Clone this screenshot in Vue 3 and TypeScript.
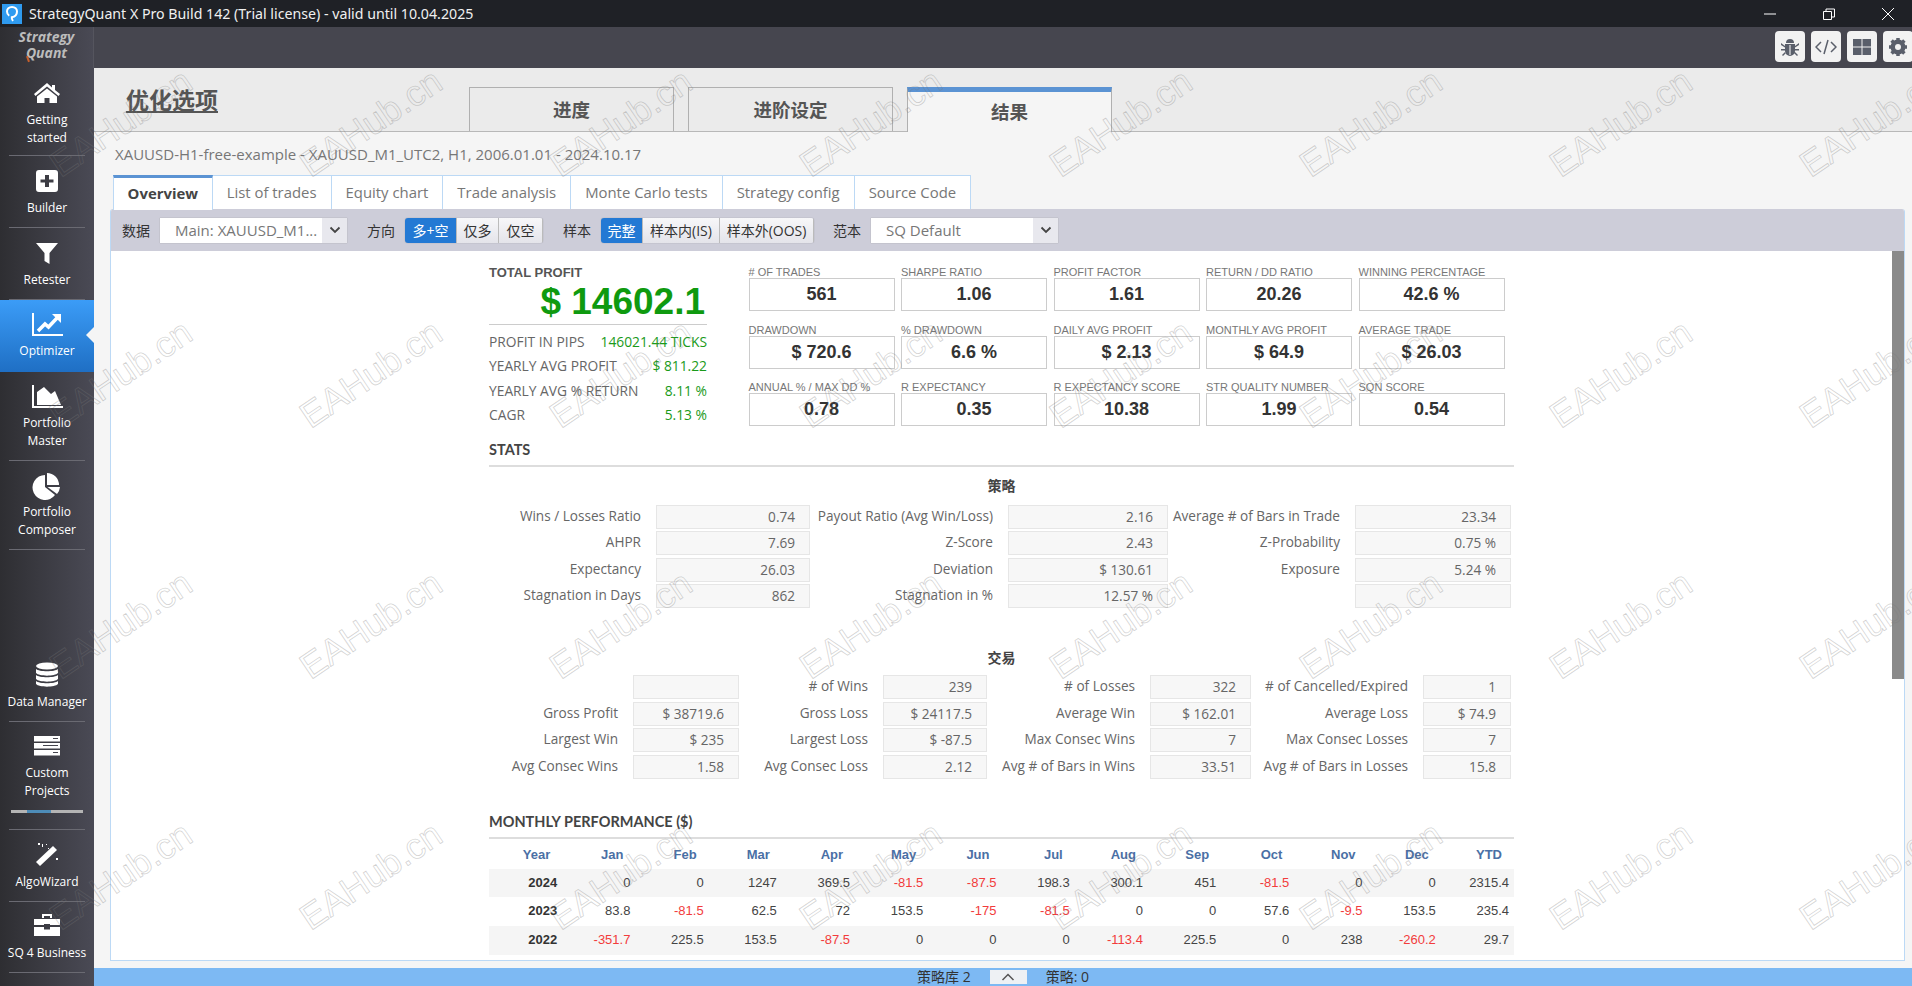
<script setup lang="ts">
const navTop = [
  { key: 'home', lines: ['Getting', 'started'] },
  { key: 'builder', lines: ['Builder'] },
  { key: 'filter', lines: ['Retester'] },
  { key: 'chart', lines: ['Optimizer'], active: true },
  { key: 'area', lines: ['Portfolio', 'Master'] },
  { key: 'pie', lines: ['Portfolio', 'Composer'] },
]
const navBottom = [
  { key: 'db', lines: ['Data Manager'] },
  { key: 'server', lines: ['Custom', 'Projects'], bar: true },
  { key: 'wand', lines: ['AlgoWizard'] },
  { key: 'case', lines: ['SQ 4 Business'] },
]

const subTabs = ['Overview', 'List of trades', 'Equity chart', 'Trade analysis', 'Monte Carlo tests', 'Strategy config', 'Source Code']

const totals = [
  ['PROFIT IN PIPS', '146021.44 TICKS'],
  ['YEARLY AVG PROFIT', '$ 811.22'],
  ['YEARLY AVG % RETURN', '8.11 %'],
  ['CAGR', '5.13 %'],
]

const kpis = [
  ['# OF TRADES', '561'], ['SHARPE RATIO', '1.06'], ['PROFIT FACTOR', '1.61'], ['RETURN / DD RATIO', '20.26'], ['WINNING PERCENTAGE', '42.6 %'],
  ['DRAWDOWN', '$ 720.6'], ['% DRAWDOWN', '6.6 %'], ['DAILY AVG PROFIT', '$ 2.13'], ['MONTHLY AVG PROFIT', '$ 64.9'], ['AVERAGE TRADE', '$ 26.03'],
  ['ANNUAL % / MAX DD %', '0.78'], ['R EXPECTANCY', '0.35'], ['R EXPECTANCY SCORE', '10.38'], ['STR QUALITY NUMBER', '1.99'], ['SQN SCORE', '0.54'],
]

const strategyStats = [
  ['Wins / Losses Ratio', '0.74'], ['Payout Ratio (Avg Win/Loss)', '2.16'], ['Average # of Bars in Trade', '23.34'],
  ['AHPR', '7.69'], ['Z-Score', '2.43'], ['Z-Probability', '0.75 %'],
  ['Expectancy', '26.03'], ['Deviation', '$ 130.61'], ['Exposure', '5.24 %'],
  ['Stagnation in Days', '862'], ['Stagnation in %', '12.57 %'], ['', ''],
]

const tradeStats = [
  ['', ''], ['# of Wins', '239'], ['# of Losses', '322'], ['# of Cancelled/Expired', '1'],
  ['Gross Profit', '$ 38719.6'], ['Gross Loss', '$ 24117.5'], ['Average Win', '$ 162.01'], ['Average Loss', '$ 74.9'],
  ['Largest Win', '$ 235'], ['Largest Loss', '$ -87.5'], ['Max Consec Wins', '7'], ['Max Consec Losses', '7'],
  ['Avg Consec Wins', '1.58'], ['Avg Consec Loss', '2.12'], ['Avg # of Bars in Wins', '33.51'], ['Avg # of Bars in Losses', '15.8'],
]

const months = ['Year', 'Jan', 'Feb', 'Mar', 'Apr', 'May', 'Jun', 'Jul', 'Aug', 'Sep', 'Oct', 'Nov', 'Dec', 'YTD']
const monthly = [
  ['2024', '0', '0', '1247', '369.5', '-81.5', '-87.5', '198.3', '300.1', '451', '-81.5', '0', '0', '2315.4'],
  ['2023', '83.8', '-81.5', '62.5', '72', '153.5', '-175', '-81.5', '0', '0', '57.6', '-9.5', '153.5', '235.4'],
  ['2022', '-351.7', '225.5', '153.5', '-87.5', '0', '0', '0', '-113.4', '225.5', '0', '238', '-260.2', '29.7'],
]

// 水印网格
const marks: number[] = Array.from({ length: 32 }, (_, i) => i)
</script>

<template>
  <div class="app">
    <div class="titlebar">
      <div class="logo-box">
        <svg width="20" height="20" viewBox="0 0 20 20"><path d="M11 17c-1.200-1.500-1.400-2.500-1.200-3.800 3-.4 5.200-2.700 5.200-5.700C15 5 13 3 10 3 7 3 5 5 5 7.500c0 1.800.8 3.200 2.200 4.200" fill="none" stroke="#fff" stroke-width="2"/></svg>
      </div>
      <span class="title-text">StrategyQuant X Pro Build 142 (Trial license) - valid until 10.04.2025</span>
      <div class="win-ctrls">
        <svg width="14" height="14" viewBox="0 0 14 14"><path d="M1 7h12" stroke="#fff" fill="none"/></svg>
        <svg width="14" height="14" viewBox="0 0 14 14"><path d="M1.500 4.500h8v8h-8zM4 4.500V2h8.500v8H9.500" stroke="#fff" fill="none"/></svg>
        <svg width="14" height="14" viewBox="0 0 14 14"><path d="M1 1l12 12M13 1L1 13" stroke="#fff" fill="none"/></svg>
      </div>
    </div>

    <div class="body">
      <aside class="sidebar">
        <div class="brand"><span>Strategy</span><span>Quant</span><i class="brand-tail"></i></div>
        <div class="nav-list">
          <div v-for="item in navTop" :key="item.key" class="nav-item" :class="{ active: item.active }">
            <svg class="nav-icon" viewBox="0 0 32 28" width="32" height="28">
              <path v-if="item.key === 'home'" d="M16 3L3 14l1.500 2L16 6.500 27.500 16l1.500-2-5-4V5h-3v2.500zM6 16.500V23h7.500v-5h5v5H26v-6.500L16 8.500z" fill="#fff"/>
              <path v-else-if="item.key === 'builder'" fill-rule="evenodd" d="M8 2h16a3 3 0 013 3v16a3 3 0 01-3 3H8a3 3 0 01-3-3V5a3 3 0 013-3zm6 5v4.500H9.500v3H14V19h4v-4.500h4.500v-3H18V7z" fill="#fff"/>
              <path v-else-if="item.key === 'filter'" d="M5 3h22l-8.500 10v11L13.500 21v-8z" fill="#fff"/>
              <g v-else-if="item.key === 'chart'">
                <path d="M2 2v22h30" fill="none" stroke="#fff" stroke-width="2"/>
                <path d="M7 20l7-7 3.500 3L26 7" fill="none" stroke="#fff" stroke-width="3.500"/>
                <path d="M21 3h9v9z" fill="#fff"/>
              </g>
              <g v-else-if="item.key === 'area'">
                <path d="M2 2v22h30" fill="none" stroke="#fff" stroke-width="2"/>
                <path d="M6 22V9l7-5 7 7 4-3 6 14z" fill="#fff"/>
              </g>
              <g v-else fill="#fff">
                <path d="M14 3a12.500 12.500 0 1010 20L14 15z"/>
                <path d="M16 1a12 12 0 0112 12H16z"/>
                <path d="M16.500 15H29a12 12 0 01-3 7z"/>
              </g>
            </svg>
            <span v-for="line in item.lines" :key="line">{{ line }}</span>
          </div>
        </div>
        <div class="nav-list nav-bottom">
          <div v-for="item in navBottom" :key="item.key" class="nav-item">
            <svg class="nav-icon" viewBox="0 0 32 28" width="32" height="28">
              <g v-if="item.key === 'db'" fill="#fff">
                <ellipse cx="16" cy="4" rx="11" ry="3.500"/>
                <path d="M5 7c3 3 19 3 22 0v4c-3 3.500-19 3.500-22 0zM5 13c3 3 19 3 22 0v4c-3 3.500-19 3.500-22 0zM5 19c3 3 19 3 22 0v3c-3 3.500-19 3.500-22 0z"/>
              </g>
              <g v-else-if="item.key === 'server'">
                <path d="M3 3h26v5.500H3zM3 10h26v5.500H3zM3 17h26v5.500H3z" fill="#fff"/>
                <path d="M22 5.500h5M12 12.500h15M22 19.500h5" stroke="#46464f" fill="none"/>
              </g>
              <g v-else-if="item.key === 'wand'" fill="#fff">
                <path d="M5 20L22 4l4 4L9 24z"/>
                <path d="M7 1h2v2H7zM11 2h1v3h-1zM15 2h1v1h-1zM25 16h2v2h-2zM17 6h1v1h-1z"/>
              </g>
              <g v-else fill="#fff">
                <path d="M3 6h26v6H19v-1h-6v1H3zM3 14h10v2.500h6V14h10v9H3z"/>
                <path d="M11 5V1h10v4h-2V3h-6v2z"/>
              </g>
            </svg>
            <span v-for="line in item.lines" :key="line">{{ line }}</span>
            <div v-if="item.bar" class="nav-progress"><i></i></div>
          </div>
        </div>
      </aside>

      <main class="main">
        <div class="topbar">
          <button class="tool-btn">
            <svg width="20" height="20" viewBox="0 0 20 20" fill="#5a5f6b"><path d="M6 6a4 4 0 018 0zM5 7h10v7a5 5 0 01-10 0zM1 6l4 3v1.500L1 8zM19 6l-4 3v1.500L19 8zM1 12h4v1.500H1zM19 12h-4v1.500h4zM5 15l-3 3 1 1 3-3zM15 15l3 3-1 1-3-3z"/><path d="M9.500 8h1v10h-1z" fill="#fff"/></svg>
          </button>
          <button class="tool-btn">
            <svg width="22" height="18" viewBox="0 0 22 18" fill="none" stroke="#5a5f6b" stroke-width="1.500"><path d="M6 4L1 9l5 5M16 4l5 5-5 5M13 2L9 16"/></svg>
          </button>
          <button class="tool-btn">
            <svg width="20" height="20" viewBox="0 0 20 20" fill="#5a5f6b"><path d="M1 2h8.500v7.500H1zM10.500 2H19v7.500h-8.500zM1 10.500h8.500V18H1zM10.500 10.500H19V18h-8.500z"/></svg>
          </button>
          <button class="tool-btn gear">
            <svg width="20" height="20" viewBox="0 0 20 20"><circle cx="10" cy="10" r="5.500" fill="none" stroke="#5a5f6b" stroke-width="4"/><path d="M10 1v18M1 10h18M3.600 3.600l12.800 12.800M16.400 3.600L3.600 16.400" stroke="#5a5f6b" stroke-width="3.500"/><circle cx="10" cy="10" r="3" fill="#f2f2f2"/></svg>
          </button>
        </div>

        <header class="page-head">
          <h1>优化选项</h1>
          <div class="big-tabs">
            <div class="big-tab">进度</div>
            <div class="big-tab">进阶设定</div>
            <div class="big-tab current">结果</div>
          </div>
        </header>

        <div class="work">
          <div class="subtitle">XAUUSD-H1-free-example - XAUUSD_M1_UTC2, H1, 2006.01.01 - 2024.10.17</div>
          <div class="sub-tabs">
            <div v-for="(t, i) in subTabs" :key="t" class="sub-tab" :class="{ on: i === 0 }">{{ t }}</div>
          </div>

          <section class="panel">
            <div class="toolbar">
              <span class="t-label">数据</span>
              <div class="select s1"><span>Main: XAUUSD_M1...</span><i><svg width="12" height="8" viewBox="0 0 12 8"><path d="M1.500 1.500L6 6l4.500-4.500" fill="none" stroke="#444" stroke-width="1.800"/></svg></i></div>
              <span class="t-label l2">方向</span>
              <div class="btn-group">
                <button class="on w52">多+空</button><button class="w42">仅多</button><button class="w44">仅空</button>
              </div>
              <span class="t-label l3">样本</span>
              <div class="btn-group">
                <button class="on w42">完整</button><button class="w77">样本内(IS)</button><button class="w94">样本外(OOS)</button>
              </div>
              <span class="t-label l4">范本</span>
              <div class="select s2"><span>SQ Default</span><i><svg width="12" height="8" viewBox="0 0 12 8"><path d="M1.500 1.500L6 6l4.500-4.500" fill="none" stroke="#444" stroke-width="1.800"/></svg></i></div>
            </div>

            <div class="sheet">
              <div class="report">
                <div class="summary">
                  <div class="total">
                    <div class="total-label">TOTAL PROFIT</div>
                    <div class="total-value">$ 14602.1</div>
                    <div v-for="row in totals" :key="row[0]" class="total-row">
                      <span>{{ row[0] }}</span><b>{{ row[1] }}</b>
                    </div>
                  </div>
                  <div class="kpis">
                    <div v-for="k in kpis" :key="k[0]" class="kpi">
                      <label>{{ k[0] }}</label>
                      <div class="kpi-box">{{ k[1] }}</div>
                    </div>
                  </div>
                </div>

                <h2 class="sec stats-head">STATS</h2>
                <h3 class="group">策略</h3>
                <div class="stat-grid g3">
                  <template v-for="(s, i) in strategyStats" :key="i">
                    <span class="st-label">{{ s[0] }}</span>
                    <span class="st-val">{{ s[1] }}</span>
                  </template>
                </div>
                <h3 class="group g2">交易</h3>
                <div class="stat-grid g4">
                  <template v-for="(s, i) in tradeStats" :key="i">
                    <span class="st-label">{{ s[0] }}</span>
                    <span class="st-val">{{ s[1] }}</span>
                  </template>
                </div>

                <h2 class="sec month-head">MONTHLY PERFORMANCE ($)</h2>
                <div class="month-row heads">
                  <span v-for="m in months" :key="m">{{ m }}</span>
                </div>
                <div v-for="(r, i) in monthly" :key="r[0]" class="month-row" :class="{ alt: i !== 1 }">
                  <span v-for="(c, j) in r" :key="j" :class="{ yr: j === 0, neg: c.startsWith('-') }">{{ c }}</span>
                </div>
              </div>
              <div class="scroll-thumb"></div>
            </div>
          </section>

          <footer class="status">
            <span>策略库 2</span>
            <button class="up"><svg width="14" height="8" viewBox="0 0 14 8"><path d="M1.500 7L7 1.500 12.500 7" fill="none" stroke="#555" stroke-width="1.500"/></svg></button>
            <span>策略: 0</span>
          </footer>
        </div>
      </main>
    </div>

    <div class="watermarks">
      <span v-for="n in marks" :key="n" class="wm">EAHub.cn</span>
    </div>
  </div>
</template>

<style>
html, body { margin: 0; padding: 0; overflow: hidden; }
</style>

<style scoped>
.app {
  position: relative;
  width: 1912px;
  height: 986px;
  overflow: hidden;
  display: flex;
  flex-direction: column;
  font-family: "Open Sans", "Noto Sans CJK SC", sans-serif;
  color: #444;
}

.titlebar {
  height: 27px;
  flex: none;
  background: #1f2126;
  display: flex;
  align-items: center;
  color: #f0f0f0;
}
.logo-box {
  width: 20px;
  height: 20px;
  margin-left: 2px;
  background: #2f9bf0;
}
.title-text {
  margin-left: 7px;
  font: 14.200px "Noto Sans", sans-serif;
}
.win-ctrls {
  margin-left: auto;
  display: flex;
  gap: 45px;
  padding-right: 17px;
}

.body {
  flex: 1;
  display: flex;
  min-height: 0;
}

.sidebar {
  width: 94px;
  flex: none;
  background: linear-gradient(90deg, #2e2e32, #4a4a55);
  display: flex;
  flex-direction: column;
  color: #fff;
}
.brand {
  position: relative;
  height: 41px;
  display: flex;
  flex-direction: column;
  align-items: center;
  font: italic bold 14px/16px "Open Sans", sans-serif;
  color: #bcbcbc;
  padding-top: 2px;
  box-sizing: border-box;
  border-right: 1px solid #55555e;
}
.brand-tail {
  position: absolute;
  left: 27px;
  top: 29px;
  width: 2px;
  height: 6px;
  background: #c8602c;
  transform: rotate(-20deg);
}
.nav-list {
  display: flex;
  flex-direction: column;
}
.nav-bottom {
  margin-top: auto;
}
.nav-item {
  position: relative;
  display: flex;
  flex-direction: column;
  align-items: center;
  font-size: 12px;
  line-height: 18px;
  white-space: nowrap;
  border-bottom: 1px solid #6a6a72;
  margin: 0 9px;
  padding-top: 12px;
  box-sizing: border-box;
  height: 72px;
}
.nav-item:nth-child(1) { height: 88px; }
.nav-item:nth-child(5),
.nav-item:nth-child(6) { height: 89px; padding-top: 11px; }
.nav-item.active {
  margin: 0;
  height: 72px;
  padding-top: 11px;
  background: linear-gradient(180deg, #3b9cf7, #1f6fc4);
  border-bottom: none;
}
.nav-item.active::after {
  content: "";
  position: absolute;
  right: 0;
  top: 27px;
  border: 8px solid transparent;
  border-right-color: #f5f5f5;
  border-left: none;
}
.nav-bottom .nav-item:nth-child(1) { height: 72px; }
.nav-bottom .nav-item:nth-child(2) { height: 108px; padding-top: 11px; }
.nav-bottom .nav-item:nth-child(3) { height: 72px; }
.nav-bottom .nav-item:nth-child(4) { height: 71px; padding-top: 11px; margin-bottom: 13px; }
.nav-icon {
  flex: none;
  margin-bottom: 3px;
}
.nav-progress {
  width: 72px;
  height: 3px;
  margin-top: 10px;
  background: #b4b4b4;
}
.nav-progress i {
  display: block;
  width: 24px;
  height: 3px;
  margin-left: 16px;
  background: #4d8cb8;
}

.main {
  flex: 1;
  min-width: 0;
  display: flex;
  flex-direction: column;
}
.topbar {
  height: 41px;
  flex: none;
  background: #46464f;
  display: flex;
  justify-content: flex-end;
  gap: 6px;
  padding-top: 4px;
  box-sizing: border-box;
  margin-right: -1px;
}
.tool-btn {
  width: 30px;
  height: 31px;
  padding: 0;
  border: none;
  border-radius: 4px;
  background: #f2f2f2;
  display: flex;
  align-items: center;
  justify-content: center;
}

.page-head {
  height: 64px;
  flex: none;
  box-sizing: border-box;
  background: #ebebeb;
  border-bottom: 1px solid #b8b8b8;
  display: flex;
  align-items: flex-end;
}
.page-head h1 {
  margin: 0 0 0 32px;
  width: 343px;
  align-self: flex-start;
  padding-top: 16px;
  font-size: 23px;
  line-height: 32px;
  font-weight: 700;
  color: #555;
  text-decoration: underline;
}
.big-tabs {
  display: flex;
  gap: 14px;
}
.big-tab {
  width: 205px;
  height: 44px;
  box-sizing: border-box;
  border: 1px solid #b0b0b0;
  border-bottom: none;
  text-align: center;
  font-size: 18.500px;
  line-height: 44px;
  font-weight: 700;
  color: #555;
}
.big-tab.current {
  height: 45px;
  margin-bottom: -1px;
  border-top: 5px solid #5b93d3;
  background: #f5f5f5;
  line-height: 40px;
}

.work {
  flex: 1;
  min-height: 0;
  background: #f5f5f5;
  display: flex;
  flex-direction: column;
}
.subtitle {
  height: 43px;
  flex: none;
  box-sizing: border-box;
  padding: 12px 0 0 21px;
  font-size: 15px;
  line-height: 20px;
  color: #777;
}
.sub-tabs {
  display: flex;
  height: 35px;
  flex: none;
  margin-left: 19px;
}
.sub-tab {
  padding: 0 14px;
  border: 1px solid #bcd9f5;
  border-left: none;
  font-size: 14.900px;
  line-height: 33px;
  color: #777;
  background: #fff;
  box-sizing: border-box;
}
.sub-tab.on {
  padding: 0 13.600px;
  border-top: 3px solid #5b93d3;
  border-left: 1px solid #bcd9f5;
  border-bottom: none;
  font-weight: 700;
  color: #444;
  line-height: 31px;
  position: relative;
  z-index: 1;
}

.panel {
  margin: -1px 7px 0 16px;
  height: 751px;
  flex: none;
  border: 1px solid #bcd9f5;
  border-top: none;
  border-radius: 3px 3px 0 0;
  background: #fff;
  display: flex;
  flex-direction: column;
  overflow: hidden;
}
.toolbar {
  height: 42px;
  flex: none;
  background: #cdcdd9;
  display: flex;
  align-items: center;
  padding-left: 11px;
  font-size: 14px;
}
.t-label {
  width: 38px;
  color: #333;
}
.t-label.l2 { margin-left: 20px; }
.t-label.l3 { margin-left: 20px; }
.t-label.l4 { margin-left: 19px; }
.select {
  height: 25px;
  background: #fff;
  display: flex;
  justify-content: space-between;
  align-items: center;
  font-size: 15px;
  color: #777;
  box-shadow: 0 0 1px #999;
}
.select span { padding-left: 15px; white-space: nowrap; }
.select i {
  width: 25px;
  height: 25px;
  background: #e8e8ee;
  display: flex;
  align-items: center;
  justify-content: center;
}
.s1 { width: 187px; }
.s2 { width: 187px; }
.btn-group {
  display: flex;
  height: 25px;
  border-radius: 3px;
  overflow: hidden;
  box-shadow: 0 0 1px #888;
}
.btn-group button {
  padding: 0;
  border: none;
  border-right: 1px solid #bbb;
  background: linear-gradient(#f7f7f9, #e4e4ea);
  font: 14px/23px "Open Sans", "Noto Sans CJK SC", sans-serif;
  color: #333;
  white-space: nowrap;
}
.btn-group button.on { background: #2379d4; color: #fff; }
.w42 { width: 42px; }
.w44 { width: 44px; }
.w52 { width: 52px; }
.w77 { width: 77px; }
.w94 { width: 94px; }

.sheet {
  flex: 1;
  min-height: 0;
  position: relative;
  overflow: hidden;
}
.report {
  margin-left: 378px;
  width: 1025px;
}
.summary {
  display: flex;
  padding-top: 14px;
}
.total {
  width: 218px;
  flex: none;
}
.total-label {
  font: bold 13px/16px "Liberation Sans", sans-serif;
  color: #555;
}
.total-value {
  font: bold 37px/41px "Liberation Sans", sans-serif;
  color: #0f9a0f;
  text-align: right;
  padding-right: 2px;
  padding-bottom: 2px;
  border-bottom: 1px solid #ccc;
  margin-bottom: 5px;
}
.total-row {
  display: flex;
  justify-content: space-between;
  font: 13.800px/24.300px "Open Sans", sans-serif;
  color: #666;
}
.total-row b {
  font-weight: 400;
  color: #1a9a1a;
}
.kpis {
  margin-left: 41.500px;
  display: grid;
  grid-template-columns: repeat(5, 146px);
  column-gap: 6.500px;
  grid-auto-rows: 57.500px;
  align-content: start;
}
.kpi label {
  display: block;
  font: 11px/15px "Liberation Sans", sans-serif;
  color: #777;
  white-space: nowrap;
  height: 13px;
}
.kpi-box {
  height: 33px;
  box-sizing: border-box;
  border: 1px solid #ccc;
  text-align: center;
  font: bold 18px/30px "Liberation Sans", sans-serif;
  color: #333;
}

.sec {
  margin: 0;
  font: 700 14.500px/20px Lato, "Open Sans", sans-serif;
  color: #444;
  border-bottom: 2px solid #ddd;
  padding-bottom: 5px;
}
.stats-head {
  margin-top: 2px;
}
.group {
  margin: 10px 0 10px;
  text-align: center;
  font-size: 14px;
  line-height: 18px;
  font-weight: 700;
  color: #444;
}
.group.g2 { margin-top: 41px; margin-bottom: 8px; }
.stat-grid {
  display: grid;
  grid-auto-rows: 24px;
  row-gap: 2.500px;
  font-size: 13.600px;
  color: #666;
  width: 1022px;
}
.g3 {
  grid-template-columns: 167px 154px 198px 160px 187px 156px;
}
.g4 {
  grid-template-columns: 144px 106px 144px 104px 163px 101px 172px 88px;
}
.st-label {
  text-align: right;
  padding-right: 15px;
  line-height: 22px;
  white-space: nowrap;
}
.st-val {
  background: #f7f7f7;
  border: 1px solid #e6e6e6;
  box-sizing: border-box;
  text-align: right;
  padding-right: 14px;
  line-height: 22px;
  white-space: nowrap;
}
.month-head {
  margin-top: 33px;
}
.month-row {
  display: grid;
  grid-template-columns: repeat(14, 1fr);
  height: 28.700px;
  font: 13px/28px "Liberation Sans", sans-serif;
  color: #444;
  text-align: right;
}
.month-row span {
  padding-right: 5px;
}
.month-row.alt {
  background: #f5f5f5;
}
.month-row.heads {
  height: 30px;
  line-height: 32px;
  font-weight: 700;
  color: #4a6fa5;
}
.month-row.heads span {
  padding-right: 12px;
}
.yr {
  font-weight: 700;
  color: #333;
}
.neg {
  color: #f23c3c;
}
.scroll-thumb {
  position: absolute;
  right: 0;
  top: 0;
  width: 12px;
  height: 428px;
  background: #8a8a8a;
}

.status {
  flex: 1;
  min-height: 0;
  margin-top: 7px;
  background: #7db9f3;
  display: flex;
  align-items: center;
  justify-content: center;
  gap: 19px;
  font-size: 14px;
  line-height: 18px;
  color: #333;
}
.up {
  width: 37px;
  height: 14px;
  padding: 0;
  border: none;
  background: #eef1f4;
  display: flex;
  align-items: center;
  justify-content: center;
}

/* 水印 */
.watermarks {
  position: absolute;
  left: -4px;
  top: -3px;
  pointer-events: none;
  display: grid;
  grid-template-columns: repeat(8, 250px);
  grid-auto-rows: 251px;
  place-items: center;
}
.wm {
  font: 36px/40px "Liberation Sans", sans-serif;
  color: transparent;
  -webkit-text-stroke: 0.8px rgba(120, 120, 120, 0.34);
  transform: rotate(-34deg);
  white-space: nowrap;
}
</style>
